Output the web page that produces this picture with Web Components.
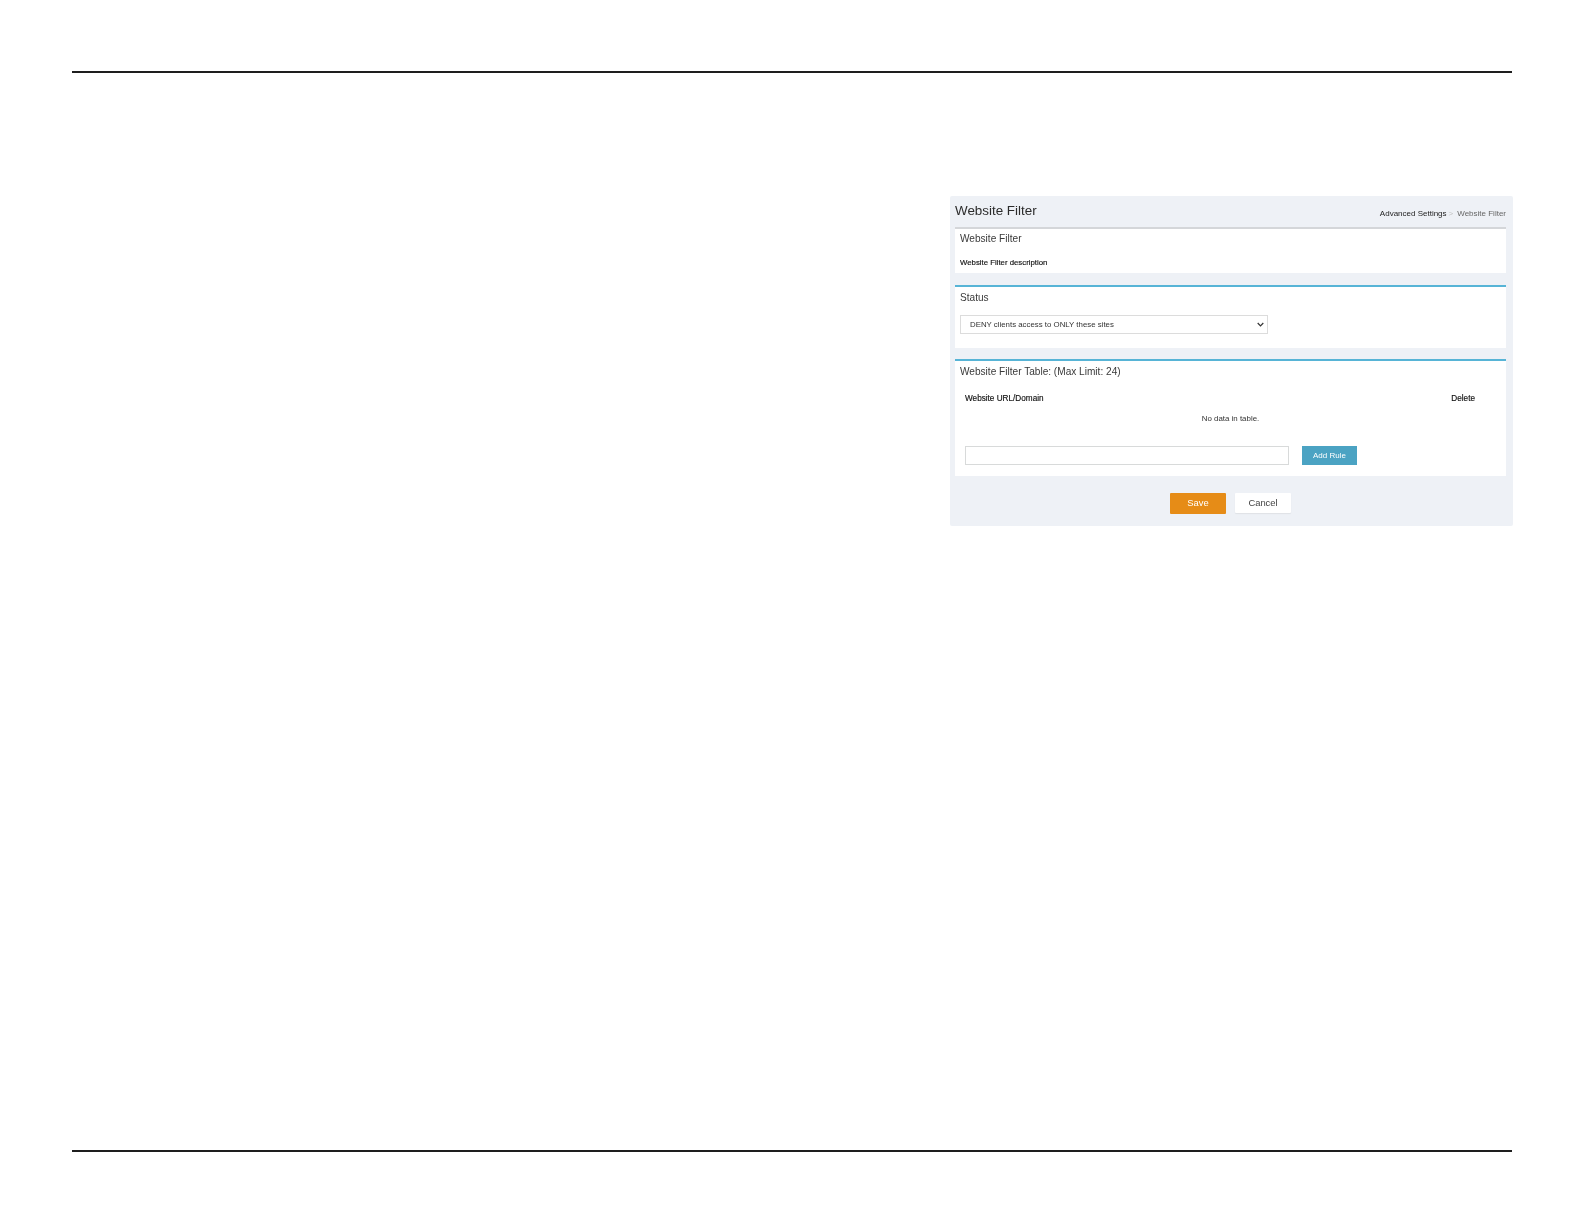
<!DOCTYPE html>
<html><head><meta charset="utf-8"><title>Website Filter</title>
<style>html,body{margin:0;background:#fff}body{font-family:"Liberation Sans",Arial,sans-serif}</style></head>
<body>
<manual-page>
<filter-panel>
<span slot="title">Website Filter</span>
<filter-crumbs slot="crumbs"></filter-crumbs>
<filter-card heading="Website Filter" tone="grey" pt="4" h="46">
  <div style="font-size:7.8px;color:#111;-webkit-text-stroke:.15px #111;padding-top:2px;line-height:10px">Website Filter description</div>
</filter-card>
<filter-card heading="Status" tone="blue" h="63" mt="12"><status-select></status-select></filter-card>
<filter-card heading="Website Filter Table: (Max Limit: 24)" tone="blue" h="117" mt="11"><rule-table></rule-table></filter-card>
<panel-actions slot="actions"></panel-actions>
</filter-panel>
</manual-page>
<script>
function def(name, html, init){
  customElements.define(name, class extends HTMLElement{
    constructor(){super();this.attachShadow({mode:'open'}).innerHTML=html;}
    connectedCallback(){ if(init) init(this); }
  });
}
def('manual-page',`<style>
:host{display:flex;flex-direction:column;width:1584px;height:1224px;box-sizing:border-box;padding:71px 72px 72px;overflow:hidden}
.r{height:2px;background:#1e1e1e;flex:none}
.m{flex:1;padding:123px 0 0 878px}
</style><div class="r"></div><div class="m"><slot></slot></div><div class="r"></div>`);
def('filter-panel',`<style>
:host{display:block;width:563px;height:330px;box-sizing:border-box;background:#eef1f6;padding:0 7px 0 5px;border-radius:2px;filter:blur(.35px)}
.top{height:31px;display:flex;justify-content:space-between;align-items:flex-start}
.t{font-size:13.4px;line-height:16px;color:#2b2b2b;margin-top:7px}
.a{display:flex;justify-content:center;margin-top:17px}
</style><div class="top"><div class="t"><slot name="title"></slot></div><slot name="crumbs"></slot></div>
<slot></slot><div class="a"><slot name="actions"></slot></div>`);
def('filter-crumbs',`<style>
:host{display:flex;font-size:8px;line-height:10px;margin-top:13px;white-space:nowrap}
.a{color:#222}.s{color:#c4c4c4;margin:0 4px 0 2px}.c{color:#666}
</style><span class="a">Advanced Settings</span><span class="s">&gt;</span><span class="c">Website Filter</span>`);
def('filter-card',`<style>
:host{display:block;box-sizing:border-box;background:#fff;border-top:2px solid #57b4d6;padding:5px 5px 0}
:host([tone=grey]){border-top-color:#d4d6d9}
h2{margin:0;font-size:10.1px;font-weight:400;line-height:12px;color:#3a3a3a}
.b{margin-top:11px}
</style><h2></h2><div class="b"><slot></slot></div>`, el=>{
  el.shadowRoot.querySelector('h2').textContent=el.getAttribute('heading');
  el.style.height=el.getAttribute('h')+'px';
  if(el.hasAttribute('mt')) el.style.marginTop=el.getAttribute('mt')+'px';
  if(el.hasAttribute('pt')) el.style.paddingTop=el.getAttribute('pt')+'px';
});
def('status-select',`<style>
:host{display:block;position:relative;width:308px;height:19px}
select{display:block;appearance:none;-webkit-appearance:none;width:308px;height:19px;box-sizing:border-box;border:1px solid #dcdcdc;background:#fff;border-radius:0;padding:0 0 0 9px;margin:0;font:7.85px "Liberation Sans",Arial,sans-serif;color:#333;outline:0}
svg{position:absolute;right:4px;top:7px;width:7px;height:5px;pointer-events:none}
</style><select><option>DENY clients access to ONLY these sites</option></select>
<svg viewBox="0 0 7 5"><path d="M.7 1 3.5 3.8 6.3 1" fill="none" stroke="#333" stroke-width="1.2"/></svg>`);
def('rule-table',`<style>
:host{display:block;font-size:8px;line-height:10px;color:#222;padding:5px 0 0 5px}
.h{display:flex;justify-content:space-between;padding-right:26px;font-size:8.2px;color:#111;-webkit-text-stroke:.15px #111}
.n{text-align:center;margin-top:10px;padding-right:5px;font-size:7.9px;color:#333}
.f{display:flex;margin-top:22px;gap:13px}
input{display:block;width:324px;height:19px;box-sizing:border-box;border:1px solid #d8dada;background:#fff;margin:0;padding:0;outline:0}
button{width:55px;height:19px;border:0;background:#4ba3c3;color:#fff;font:8px "Liberation Sans",Arial,sans-serif;padding:0;margin:0}
</style><div class="h"><span>Website URL/Domain</span><span>Delete</span></div>
<div class="n">No data in table.</div>
<div class="f"><input type="text"><button>Add Rule</button></div>`);
def('panel-actions',`<style>
:host{display:flex;gap:9px;align-items:flex-start}
button{height:21px;box-sizing:border-box;border:0;padding:0 0 2px;margin:0;font:9.4px "Liberation Sans",Arial,sans-serif;border-radius:1px}
.s{width:56px;background:#e68c17;color:#fff}
.c{width:56px;height:20px;background:#fff;color:#444;box-shadow:0 1px 1px #dfe2e6}
</style><button class="s">Save</button><button class="c">Cancel</button>`);
</script>
</body></html>
